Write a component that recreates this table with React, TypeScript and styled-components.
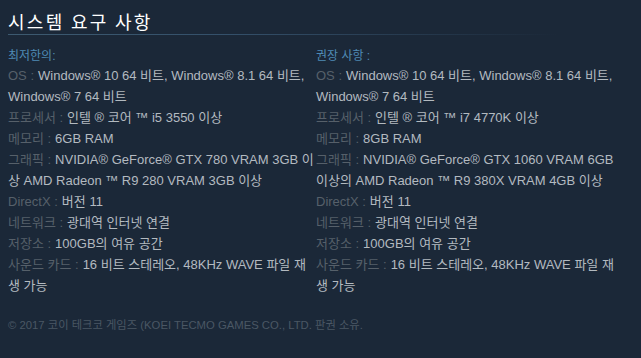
import React from "react";
import styled, { createGlobalStyle } from "styled-components";

const Global = createGlobalStyle`
  html, body { margin: 0; padding: 0; background: #1b2838; }
  body { font-family: "Liberation Sans", "Noto Sans CJK KR", sans-serif; }
`;

const Page = styled.div`
  width: 641px;
  height: 358px;
  box-sizing: border-box;
  padding: 8px 8px 0 8px;
  background: #1b2838;
`;

const Title = styled.h2`
  margin: 0;
  font-family: "Noto Sans CJK KR", sans-serif;
  font-weight: 400;
  font-size: 18px;
  letter-spacing: 2.3px;
  line-height: 26px;
  color: #ffffff;
`;

const Rule = styled.div`
  height: 1px;
  width: 550px;
  background: linear-gradient(to right, #3d5a70 0%, #34506a 40%, #1b2838 100%);
`;

const Columns = styled.div`
  display: grid;
  grid-template-columns: 308px 308px;
  column-gap: 0;
  margin-top: 12px;
`;

const Col = styled.div`
  font-size: 13px;
  color: #b3bac0;
`;

const Heading = styled.div`
  color: #4f8bb5;
  font-size: 12px;
  line-height: 18px;
`;

const List = styled.ul`
  list-style: none;
  margin: 0;
  padding: 0;
`;

const Item = styled.li`
  line-height: 21px;
`;

const Label = styled.span`
  color: #56606a;
  margin-right: 4px;
`;

const Footer = styled.div`
  margin-top: 20px;
  font-size: 11.3px;
  color: #4a5764;
`;

type Req = { label: string; value: string };

const minReqs: Req[] = [
  { label: "OS :", value: "Windows® 10 64 비트, Windows® 8.1 64 비트, Windows® 7 64 비트" },
  { label: "프로세서 :", value: "인텔 ® 코어 ™ i5 3550 이상" },
  { label: "메모리 :", value: "6GB RAM" },
  { label: "그래픽 :", value: "NVIDIA® GeForce® GTX 780 VRAM 3GB 이상 AMD Radeon ™ R9 280 VRAM 3GB 이상" },
  { label: "DirectX :", value: "버전 11" },
  { label: "네트워크 :", value: "광대역 인터넷 연결" },
  { label: "저장소 :", value: "100GB의 여유 공간" },
  { label: "사운드 카드 :", value: "16 비트 스테레오, 48KHz WAVE 파일 재생 가능" },
];

const recReqs: Req[] = [
  { label: "OS :", value: "Windows® 10 64 비트, Windows® 8.1 64 비트, Windows® 7 64 비트" },
  { label: "프로세서 :", value: "인텔 ® 코어 ™ i7 4770K 이상" },
  { label: "메모리 :", value: "8GB RAM" },
  { label: "그래픽 :", value: "NVIDIA® GeForce® GTX 1060 VRAM 6GB 이상의 AMD Radeon ™ R9 380X VRAM 4GB 이상" },
  { label: "DirectX :", value: "버전 11" },
  { label: "네트워크 :", value: "광대역 인터넷 연결" },
  { label: "저장소 :", value: "100GB의 여유 공간" },
  { label: "사운드 카드 :", value: "16 비트 스테레오, 48KHz WAVE 파일 재생 가능" },
];

const ReqColumn = ({ heading, reqs }: { heading: string; reqs: Req[] }) => (
  <Col>
    <Heading>{heading}</Heading>
    <List>
      {reqs.map((r) => (
        <Item key={r.label}>
          <Label>{r.label}</Label>
          {r.value}
        </Item>
      ))}
    </List>
  </Col>
);

export default function App() {
  return (
    <Page>
      <Global />
      <Title>시스템 요구 사항</Title>
      <Rule />
      <Columns>
        <ReqColumn heading="최저한의:" reqs={minReqs} />
        <ReqColumn heading="권장 사항 :" reqs={recReqs} />
      </Columns>
      <Footer>© 2017 코이 테크코 게임즈 (KOEI TECMO GAMES CO., LTD. 판권 소유.</Footer>
    </Page>
  );
}
